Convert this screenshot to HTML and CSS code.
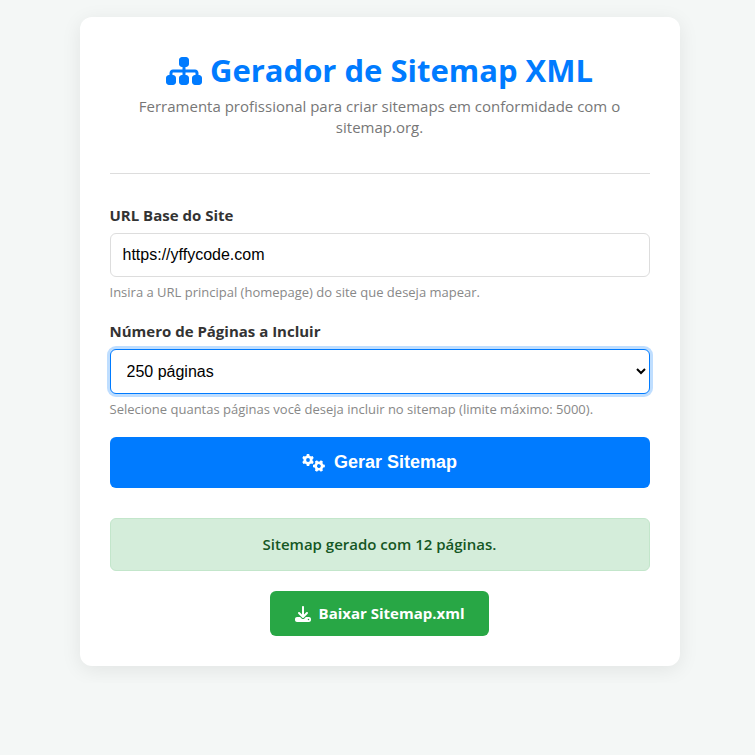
FILE: index.html
```html
<!DOCTYPE html>
<html lang="pt-BR">
<head>
  <meta charset="UTF-8">
  <meta name="viewport" content="width=device-width, initial-scale=1.0">
  <title>Gerador de Sitemap XML</title>
  <link rel="stylesheet" href="styles.css">
</head>
<body>
  <main class="container">
    <header class="header">
      <h1>
        <svg class="icon-sitemap" viewBox="0 0 576 512" aria-hidden="true"><path d="M208 80c0-26.500 21.500-48 48-48h64c26.500 0 48 21.500 48 48v64c0 26.500-21.500 48-48 48h-8v40H464c30.900 0 56 25.100 56 56v32h8c26.500 0 48 21.500 48 48v64c0 26.500-21.500 48-48 48H464c-26.500 0-48-21.500-48-48V368c0-26.500 21.500-48 48-48h8V288c0-4.400-3.600-8-8-8H312v40h8c26.500 0 48 21.500 48 48v64c0 26.500-21.500 48-48 48H256c-26.500 0-48-21.500-48-48V368c0-26.500 21.500-48 48-48h8V280H112c-4.400 0-8 3.600-8 8v32h8c26.500 0 48 21.500 48 48v64c0 26.500-21.500 48-48 48H48c-26.500 0-48-21.500-48-48V368c0-26.500 21.500-48 48-48h8V288c0-30.900 25.100-56 56-56H264V192h-8c-26.500 0-48-21.500-48-48V80z"/></svg>
        <span>Gerador de Sitemap XML</span>
      </h1>
      <p>Ferramenta profissional para criar sitemaps em conformidade com o sitemap.org.</p>
    </header>

    <form class="sitemap-form">
      <div class="form-group">
        <label for="baseUrl">URL Base do Site</label>
        <input type="url" id="baseUrl" value="https://yffycode.com">
        <small>Insira a URL principal (homepage) do site que deseja mapear.</small>
      </div>
      <div class="form-group">
        <label for="pageCount">Número de Páginas a Incluir</label>
        <select id="pageCount" class="focused">
          <option value="250" selected>250 páginas</option>
        </select>
        <small>Selecione quantas páginas você deseja incluir no sitemap (limite máximo: 5000).</small>
      </div>
      <button type="button" class="btn-generate">
        <svg class="icon-gears" viewBox="0 0 640 512" aria-hidden="true">
          <!-- small gear, used twice -->
          <defs>
            <path id="gear" fill-rule="evenodd" d="M-34-168H34L44-122A130 130 0 0 1 84-99L129-113L163-54L128-22A130 130 0 0 1 128 22L163 54L129 113L84 99A130 130 0 0 1 44 122L34 168H-34L-44 122A130 130 0 0 1-84 99L-129 113L-163 54L-128 22A130 130 0 0 1-128-22L-163-54L-129-113L-84-99A130 130 0 0 1-44-122ZM0-54A54 54 0 1 0 0 54A54 54 0 1 0 0-54Z"/>
          </defs>
          <use href="#gear" x="164" y="170"/>
          <use href="#gear" transform="translate(474 342) rotate(30)"/>
        </svg>
        <span>Gerar Sitemap</span>
      </button>
    </form>

    <div class="message success" role="status">Sitemap gerado com 12 páginas.</div>

    <div class="download-area">
      <a href="#" class="btn-download">
        <svg class="icon-download" viewBox="0 0 512 512" aria-hidden="true"><path d="M288 32c0-17.700-14.300-32-32-32s-32 14.300-32 32V274.700l-73.400-73.400c-12.500-12.500-32.800-12.500-45.300 0s-12.500 32.800 0 45.300l128 128c12.500 12.500 32.800 12.500 45.300 0l128-128c12.500-12.500 12.500-32.800 0-45.300s-32.800-12.500-45.300 0L288 274.700V32zM64 352c-35.300 0-64 28.700-64 64v32c0 35.300 28.700 64 64 64H448c35.300 0 64-28.700 64-64V416c0-35.300-28.700-64-64-64H346.500l-45.300 45.300c-25 25-65.500 25-90.500 0L165.500 352H64zm368 56a24 24 0 1 1 0 48 24 24 0 1 1 0-48z"/></svg>
        <span>Baixar Sitemap.xml</span>
      </a>
    </div>
  </main>
</body>
</html>
```
FILE: styles.css
```css
* {
  box-sizing: border-box;
}
body {
  font-family: "Segoe UI", "Open Sans", sans-serif;
  background-color: #f4f7f6;
  color: #333;
  margin: 0;
  padding: 17px 16px 17px 20px;
}
.container {
  max-width: 600px;
  margin: 0 auto;
  padding: 30px;
  background-color: #fff;
  border-radius: 12px;
  box-shadow: 0 4px 20px rgba(0, 0, 0, 0.08);
}

/* Header */
.header {
  text-align: center;
  padding-bottom: 35px;
  margin-bottom: 30px;
  border-bottom: 1px solid #ddd;
}
.header h1 {
  display: flex;
  justify-content: center;
  align-items: center;
  gap: 8px;
  margin: 0 0 2px;
  font-size: 31px;
  font-weight: 700;
  line-height: 47px;
  color: #007bff;
}
.header p {
  margin: 0;
  font-size: 15px;
  line-height: 21px;
  color: #777;
}
svg {
  fill: currentColor;
  flex-shrink: 0;
}
.icon-sitemap {
  width: 36px;
  height: 32px;
}

/* Form */
.form-group {
  margin-bottom: 18px;
}
.form-group label {
  display: block;
  margin-bottom: 7px;
  font-size: 15px;
  font-weight: 700;
  line-height: 22px;
}
.form-group input,
.form-group select {
  display: block;
  width: 100%;
  height: 44px;
  padding: 0 12px;
  border: 1px solid #ddd;
  border-radius: 6px;
  background-color: #fff;
  color: #000;
  font-family: Arial, "Liberation Sans", sans-serif;
  font-size: 16px;
}
.form-group select {
  height: 45px;
}
.form-group select.focused,
.form-group input:focus {
  outline: none;
  border-color: #007bff;
  box-shadow: 0 0 0 3px rgba(0, 123, 255, 0.25);
}
.form-group small {
  display: block;
  margin-top: 5px;
  font-size: 13px;
  line-height: 20px;
  color: #888;
}

/* Buttons */
.btn-generate {
  display: flex;
  justify-content: center;
  align-items: center;
  gap: 9px;
  width: 100%;
  height: 51px;
  border: none;
  border-radius: 6px;
  background-color: #007bff;
  color: #fff;
  font-family: Arial, "Liberation Sans", sans-serif;
  font-size: 18px;
  font-weight: 700;
  cursor: pointer;
}
.icon-gears {
  width: 23px;
  height: 18px;
}
.message {
  margin-top: 30px;
  padding: 15px;
  border: 1px solid;
  border-radius: 6px;
  font-size: 15px;
  font-weight: 600;
  line-height: 21px;
  text-align: center;
}
.message.success {
  background-color: #d4edda;
  border-color: #c3e6cb;
  color: #155724;
}
.download-area {
  display: flex;
  justify-content: center;
  margin-top: 20px;
}
.btn-download {
  display: flex;
  align-items: center;
  gap: 8px;
  padding: 12px 25px;
  border-radius: 6px;
  background-color: #28a745;
  color: #fff;
  font-size: 15px;
  font-weight: 700;
  line-height: 21px;
  text-decoration: none;
}
.icon-download {
  width: 16px;
  height: 16px;
}
```
